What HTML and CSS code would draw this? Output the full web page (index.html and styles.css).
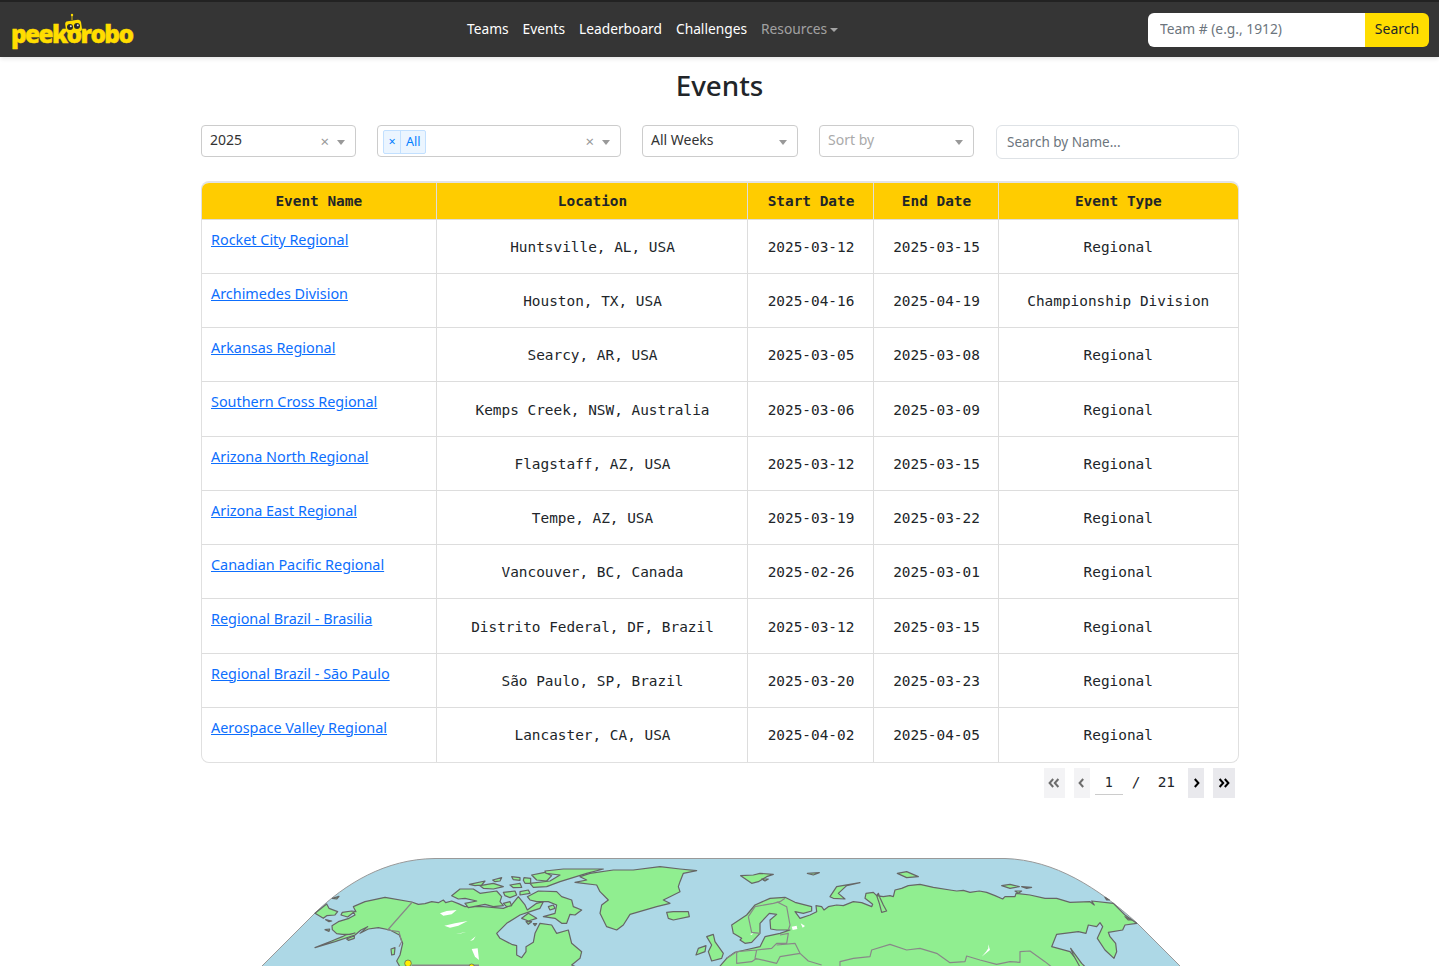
FILE: index.html
```html
<!DOCTYPE html>
<html lang="en">
<head>
<meta charset="utf-8">
<title>Events - Peekorobo</title>
<link rel="stylesheet" href="styles.css">
</head>
<body>
<nav class="topbar">
  <a class="logo" href="#">
    <span class="logo-text">peekorobo</span>
    <svg class="logo-bot" viewBox="0 0 24 26" width="24" height="26" aria-hidden="true">
      <circle cx="10" cy="2" r="1.2" fill="#ffdd00"/>
      <path d="M10 3v4" stroke="#ffdd00" stroke-width=".8"/>
      <rect x="3.5" y="7.5" width="16" height="12" rx="3" fill="#ffdd00" transform="rotate(-8 11 13)"/>
      <circle cx="8" cy="14" r="3" fill="#2a2a2a"/>
      <circle cx="15" cy="13" r="3" fill="#2a2a2a"/>
      <circle cx="8.8" cy="13.2" r="1" fill="#ddd"/>
      <circle cx="15.8" cy="12.2" r="1" fill="#ddd"/>
    </svg>
  </a>
  <div class="nav-links">
    <a href="#">Teams</a>
    <a href="#">Events</a>
    <a href="#">Leaderboard</a>
    <a href="#">Challenges</a>
    <a href="#" class="muted">Resources<span class="caret"></span></a>
  </div>
  <form class="team-search">
    <input type="text" placeholder="Team # (e.g., 1912)">
    <button type="button">Search</button>
  </form>
</nav>

<main class="page">
  <h1>Events</h1>
  <div class="filters">
    <div class="select w155"><span class="value">2025</span><span class="clear">×</span><span class="arrow"></span></div>
    <div class="select w244"><span class="tag"><span class="tag-x">×</span><span class="tag-label">All</span></span><span class="clear">×</span><span class="arrow"></span></div>
    <div class="select w156"><span class="value">All Weeks</span><span class="arrow"></span></div>
    <div class="select w155b"><span class="value placeholder">Sort by</span><span class="arrow"></span></div>
    <input class="name-search" type="text" placeholder="Search by Name...">
  </div>

  <div class="table-wrap">
    <table>
      <colgroup><col class="c1"><col class="c2"><col class="c3"><col class="c4"><col class="c5"></colgroup>
      <thead><tr><th>Event Name</th><th>Location</th><th>Start Date</th><th>End Date</th><th>Event Type</th></tr></thead>
      <tbody>
        <tr><td class="name"><a href="#">Rocket City Regional</a></td><td>Huntsville, AL, USA</td><td>2025-03-12</td><td>2025-03-15</td><td>Regional</td></tr>
        <tr><td class="name"><a href="#">Archimedes Division</a></td><td>Houston, TX, USA</td><td>2025-04-16</td><td>2025-04-19</td><td>Championship Division</td></tr>
        <tr><td class="name"><a href="#">Arkansas Regional</a></td><td>Searcy, AR, USA</td><td>2025-03-05</td><td>2025-03-08</td><td>Regional</td></tr>
        <tr><td class="name"><a href="#">Southern Cross Regional</a></td><td>Kemps Creek, NSW, Australia</td><td>2025-03-06</td><td>2025-03-09</td><td>Regional</td></tr>
        <tr><td class="name"><a href="#">Arizona North Regional</a></td><td>Flagstaff, AZ, USA</td><td>2025-03-12</td><td>2025-03-15</td><td>Regional</td></tr>
        <tr><td class="name"><a href="#">Arizona East Regional</a></td><td>Tempe, AZ, USA</td><td>2025-03-19</td><td>2025-03-22</td><td>Regional</td></tr>
        <tr><td class="name"><a href="#">Canadian Pacific Regional</a></td><td>Vancouver, BC, Canada</td><td>2025-02-26</td><td>2025-03-01</td><td>Regional</td></tr>
        <tr><td class="name"><a href="#">Regional Brazil - Brasilia</a></td><td>Distrito Federal, DF, Brazil</td><td>2025-03-12</td><td>2025-03-15</td><td>Regional</td></tr>
        <tr><td class="name"><a href="#">Regional Brazil - São Paulo</a></td><td>São Paulo, SP, Brazil</td><td>2025-03-20</td><td>2025-03-23</td><td>Regional</td></tr>
        <tr><td class="name"><a href="#">Aerospace Valley Regional</a></td><td>Lancaster, CA, USA</td><td>2025-04-02</td><td>2025-04-05</td><td>Regional</td></tr>
      </tbody>
    </table>
  </div>

  <div class="pager">
    <button class="pg first" type="button" disabled><svg viewBox="0 0 12 10" width="12" height="10"><path d="M5.2 1 1.6 5l3.6 4M10.4 1 6.8 5l3.6 4" fill="none" stroke="currentColor" stroke-width="2"/></svg></button>
    <button class="pg prev" type="button" disabled><svg viewBox="0 0 7 10" width="7" height="10"><path d="M5.2 1 1.6 5l3.6 4" fill="none" stroke="currentColor" stroke-width="2"/></svg></button>
    <input class="pg-input" type="text" value="1">
    <span class="pg-slash">/</span>
    <span class="pg-total">21</span>
    <button class="pg next" type="button"><svg viewBox="0 0 7 10" width="7" height="10"><path d="M1.8 1 5.4 5 1.8 9" fill="none" stroke="currentColor" stroke-width="2"/></svg></button>
    <button class="pg last" type="button"><svg viewBox="0 0 12 10" width="12" height="10"><path d="M1.6 1 5.2 5 1.6 9M6.8 1l3.6 4-3.6 4" fill="none" stroke="currentColor" stroke-width="2"/></svg></button>
  </div>

  <svg class="world" viewBox="201 850 1037 116" width="1037" height="116" aria-label="World map of events">
    <path class="globe" d="M261 967 L315 913 C345 884 385 859 435 858.5 L1005 858.5 C1055 860 1098 888 1137 923 L1181 967Z"/>
    <g transform="translate(255 855) scale(.33333)">
      <path class="land" d="M180 175 215 147 222 160 248 170 240 180 215 182 205 190Z"/>
      <path class="land" d="M232 130 252 124 245 132Z"/>
      <path class="land" d="M210 224 224 222 222 229Z"/>
      <path class="land" d="M212 194 230 198 222 200Z"/>
      <path class="land" d="M275 252 298 242 298 250 280 256Z"/>
      <path class="land" d="M408 282 420 278 418 298 410 300Z"/>
      <path class="land" d="M180 278 230 258 262 245 272 240 300 234 285 238 262 238 245 236 232 224 231 212 250 200 282 190 300 180 296 172 278 186 258 180 262 172 290 168 303 170 295 155 330 140 390 127 470 141 490 148 510 146 530 140 550 143 565 135 572 143 590 138 610 146 630 155 685 155 745 160 770 150 790 125 810 150 817 165 845 145 865 140 855 160 825 170 795 180 755 205 725 235 735 250 770 268 785 272 785 300 800 308 813 290 813 275 835 262 840 235 855 205 890 210 905 235 940 225 950 265 980 290 975 310 950 330 985 345 440 345 425 318 435 300 443 265 433 240 405 225 370 218 340 222 315 235 338 215 318 225 300 240 240 260Z"/>
      <path class="border" d="M472 141 398 225 432 230 440 260 432 275"/>
      <path class="border thick" d="M470 331H672"/>
      <path class="lake" d="M555 175 575 168 605 165 590 178 565 182ZM568 212 600 205 638 198 610 212 585 218ZM600 238 635 230 620 235ZM645 258 662 244 655 255ZM650 282 668 280 672 315 660 305Z"/>
      <g transform="translate(555 0)">
        <path class="land" d="M35 122 60 102 100 102 120 115 170 108 185 125 180 140 190 152 160 155 135 148 85 158 75 145 110 138 75 130 55 132Z"/>
        <path class="land" d="M88 88 135 78 125 90 105 92ZM120 92 160 85 190 95 160 102 130 100ZM158 75 185 68 180 78 165 80ZM215 65 240 68 240 76 220 74ZM252 68 272 70 272 85 255 85 250 76ZM210 90 240 85 245 97 220 98ZM190 112 225 108 230 120 210 128 195 122ZM240 110 265 105 270 115 240 120ZM190 145 210 140 215 152 200 155Z"/>
        <path class="land" d="M275 60 315 52 335 62 320 78 290 75Z"/>
        <path class="land" d="M315 48 370 42 490 42 440 55 360 80 320 95 280 97 270 85 330 78 360 60 318 55Z"/>
        <path class="land" d="M262 125 295 108 350 110 365 125 395 135 400 155 425 165 405 180 390 178 380 205 365 205 345 190 310 185 345 175 350 150 325 140 290 140 270 135Z"/>
        <path class="land" d="M325 155 340 150 345 160 330 165ZM245 190 265 175 290 190 265 198ZM258 200 275 200 265 208ZM280 206 290 206 285 212Z"/>
        <path class="land" d="M405 82 440 75 420 65 450 55 520 45 580 45 660 35 720 42 770 47 730 55 720 80 715 95 720 110 690 125 670 135 690 145 650 155 570 178 550 210 530 225 500 215 480 175 485 150 505 135 480 110 470 90Z"/>
        <path class="land" d="M680 172 700 170 745 170 748 185 700 195 685 190Z"/>
      </g>
      <g transform="translate(1275 0)">
        <path class="land" d="M182 62 220 60 240 55 280 58 260 65 235 80 215 85Z"/>
        <path class="land" d="M245 72 265 72 255 78ZM382 55 418 53 400 60ZM652 55 680 50 715 65 680 68Z"/>
        <path class="land" d="M450 125 470 95 540 83 500 92 475 115 495 132 460 130Z"/>
        <path class="land" d="M80 245 100 238 105 260 130 295 125 310 95 318 85 290 95 270Z"/>
        <path class="land" d="M48 300 55 280 78 272 75 290Z"/>
        <path class="land" d="M160 235 155 210 200 180 225 150 270 130 315 127 345 142 395 155 395 168 370 175 345 170 360 190 390 180 410 170 408 152 425 155 432 165 445 155 470 150 490 152 520 140 545 143 575 155 578 148 555 130 558 115 580 112 590 122 595 115 600 128 610 150 620 168 605 172 598 145 590 122 610 125 630 122 640 125 645 105 665 100 685 92 720 88 760 97 810 105 830 108 850 106 870 112 898 108 920 112 945 122 968 132 975 125 1005 125 1008 115 1050 120 1095 130 1130 130 1170 142 1230 140 1243 150 1235 138 1300 145 1335 180 1370 205 1335 210 1328 225 1285 232 1290 245 1307 265 1310 290 1302 310 1275 285 1252 250 1268 215 1260 203 1250 215 1225 210 1218 235 1195 230 1130 238 1115 275 1170 290 1195 320 1225 345 110 345 140 310 165 292 195 285 240 275 255 245 300 235 330 225 290 225 272 222 270 195 290 178 268 175 240 205 240 235 215 262 195 265 180 255 185 250Z"/>
        <path class="land" d="M1172 280 1205 325 1225 345 1205 345 1180 300Z"/>
        <path class="land" d="M965 92 990 88 1018 95 990 100ZM1025 95 1055 97 1040 100ZM1005 108 1025 108 1015 115ZM1275 127 1288 135 1280 135ZM1335 185 1355 195 1345 195Z"/>
        <path class="border" d="M205 185 225 155 280 145 300 140 315 130M205 185 215 232 240 235M290 140 320 155 330 210 325 225M300 240 325 235 320 265 290 265 275 280 230 285M290 270 345 265 360 295 300 305 290 325 225 310 230 285 170 290 140 310M170 290 170 325 215 320 230 310M360 295 385 318 425 330M480 340 480 320 520 310 570 305 575 285 630 268 680 285 720 280 770 295 810 323 855 320 860 303 900 315 950 328 990 320 1020 322 1020 290 1050 288 1095 320 1120 340"/>
        <path class="lake" d="M335 215 350 212 352 222 338 225ZM362 205 375 213 368 218ZM210 237 220 235 215 240ZM925 268 930 285 905 305 918 290 925 280Z"/>
      </g>
      <circle class="marker" cx="459" cy="325" r="10"/>
      <circle class="marker" cx="650" cy="335" r="8"/>
    </g>
  </svg>
</main>
</body>
</html>
```

FILE: styles.css
```css
* { box-sizing: border-box; }
html, body { margin: 0; padding: 0; background: #fff; color: #212529; }
body { font-family: "Noto Sans", "Open Sans", sans-serif; font-size: 14.4px; line-height: 1.5; }

.topbar {
  display: flex;
  align-items: center;
  height: 57px;
  padding: 1px 10px 0 12px;
  background: #353535;
  border-top: 2px solid #222;
  box-shadow: 0 2px 4px rgba(0, 0, 0, .1);
}
.logo { position: relative; display: block; width: 122px; height: 40px; text-decoration: none; flex: none; }
.logo-text {
  position: absolute;
  left: -1px;
  top: 9px;
  font-family: "Open Sans", sans-serif;
  font-weight: 800;
  font-size: 24.5px;
  line-height: 30px;
  letter-spacing: -1.65px;
  color: #ffdd00;
  -webkit-text-stroke: .4px #ffdd00;
}
.logo-bot { position: absolute; left: 50px; top: 3px; }

.nav-links { display: flex; gap: 14px; margin: -2px 0 0 333px; white-space: nowrap; }
.nav-links a { color: #fff; text-decoration: none; font-size: 13.75px; }
.nav-links a.muted { color: rgba(255, 255, 255, .55); }
.caret {
  display: inline-block;
  margin-left: 3px;
  vertical-align: 2px;
  border-top: 4px solid currentColor;
  border-left: 4px solid transparent;
  border-right: 4px solid transparent;
}

.team-search { display: flex; margin-left: auto; height: 34px; }
.team-search input {
  width: 217px;
  height: 34px;
  padding: 0 12px 3px;
  border: 0;
  border-radius: 6px 0 0 6px;
  background: #fff;
  font: inherit;
  font-size: 13.8px;
  color: #212529;
  outline: 0;
}
.team-search input::placeholder, .name-search::placeholder { color: #6c757d; opacity: 1; }
.team-search button {
  width: 64px;
  height: 34px;
  padding: 0 0 3px;
  border: 0;
  border-radius: 0 6px 6px 0;
  background: #ffdd00;
  color: #212529;
  font: inherit;
  font-size: 14px;
}

.page { width: 1037px; margin: 0 auto; }
h1 {
  margin: 0;
  padding-top: 10px;
  height: 68px;
  text-align: center;
  font-size: 27.8px;
  line-height: 37px;
  font-weight: 500;
  color: #212529;
}

.filters { display: flex; align-items: flex-start; width: 1038px; height: 56px; }
.select {
  position: relative;
  display: flex;
  align-items: center;
  height: 32px;
  padding: 0 8px;
  border: 1px solid #ccc;
  border-radius: 4px;
  background: #fff;
  font-size: 14px;
  color: #333;
}
.w155 { width: 155px; margin-right: 21px; }
.w244 { width: 244px; margin-right: 21px; padding-left: 5px; }
.w156 { width: 156px; margin-right: 21px; }
.w155b { width: 155px; margin-right: 22px; }
.value { flex: 1; padding-bottom: 4px; }
.placeholder { color: #aaa; }
.clear { position: absolute; right: 26px; top: 5px; font-size: 15px; line-height: 20px; color: #999; }
.arrow {
  position: absolute;
  right: 10px;
  top: 14px;
  border-top: 5px solid #999;
  border-left: 4.5px solid transparent;
  border-right: 4.5px solid transparent;
}
.tag {
  display: flex;
  height: 24px;
  margin-top: 2px;
  border: 1px solid #c2e0ff;
  border-radius: 2px;
  background: #ebf5ff;
  color: #007eff;
  font-size: 12.6px;
  line-height: 22px;
}
.tag-x { width: 17px; text-align: center; border-right: 1px solid #c2e0ff; }
.tag-label { padding: 0 4px 0 5px; }
.name-search {
  flex: none;
  width: 243px;
  height: 34px;
  padding: 0 10px 0;
  border: 1px solid #dee2e6;
  border-radius: 6px;
  font: inherit;
  font-size: 13.5px;
  color: #212529;
}

.table-wrap {
  width: 1038px;
  border: 1px solid #e0e0e0;
  border-top: 2px solid #e3e3e3;
  border-radius: 8px;
  overflow: hidden;
}
table {
  width: 100%;
  table-layout: fixed;
  border-collapse: collapse;
  font-family: "DejaVu Sans Mono", monospace;
  font-size: 14.4px;
  line-height: 21.6px;
}
.c1 { width: 234px; }
.c2 { width: 311px; }
.c3 { width: 126px; }
.c4 { width: 125px; }
.c5 { width: 240px; }
th, td { border-left: 1px solid #ddd; border-bottom: 1px solid #ddd; text-align: center; padding: 0 3px 0 5px; }
th:first-child, td:first-child { border-left: 0; }
tbody tr:last-child td { border-bottom: 0; }
thead tr { height: 36px; }
tbody tr { height: 54.25px; }
th { background: #ffcc00; font-weight: 700; color: #212529; padding-top: 2px; }
td { vertical-align: middle; color: #212529; padding-top: 3px; }
th:first-child { padding-left: 3px; }
th:last-child, td:last-child { padding-left: 3px; }
td.name {
  vertical-align: top;
  text-align: left;
  padding: 9px 9px 0;
  font-family: "Noto Sans", sans-serif;
  font-size: 14.4px;
}
td.name a { color: #0d6efd; }

.pager { position: relative; display: flex; align-items: center; justify-content: flex-end; height: 30px; margin-top: 5px; padding-right: 3px; }
.pg { display: flex; align-items: center; justify-content: center; height: 30px; padding: 0; border: 0; background: #e9e9ed; color: #000; }
.pg:disabled { background: #f3f3f5; color: #6d6d6d; }
.first { width: 21px; margin-right: 9px; }
.prev { width: 16px; margin-right: 5px; }
.next { width: 16px; margin-right: 9px; margin-left: 13px; }
.last { width: 22px; }
.pg-input { width: 28px; height: 23px; margin-top: 1px; padding: 0; border: 0; border-bottom: 1px solid #ccc; text-align: center; font-family: "DejaVu Sans Mono", monospace; font-size: 13.3px; color: #212529; }
.pg-slash { margin-left: 9px; width: 26px; font-family: "DejaVu Sans Mono", monospace; font-size: 14.4px; }
.pg-total { font-family: "DejaVu Sans Mono", monospace; font-size: 14.4px; }

.world { display: block; margin-top: 52px; }
.globe { fill: #add8e6; stroke: #999; stroke-width: 1; }
.land { fill: #90ee90; stroke: #666; stroke-width: 3.6; stroke-linejoin: round; }
.border { fill: none; stroke: #888; stroke-width: 3.5; stroke-linejoin: round; }
.border.thick { stroke-width: 5; }
.lake { fill: #fff; }
.marker { fill: #ffee00; stroke: #555; stroke-width: 2; }
```
